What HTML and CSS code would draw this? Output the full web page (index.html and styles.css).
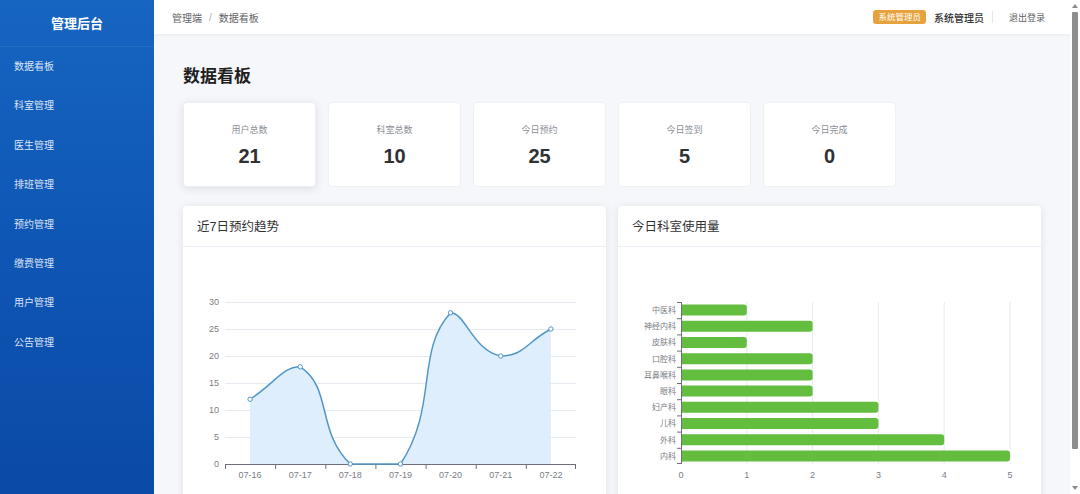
FILE: index.html
```html
<!DOCTYPE html>
<html lang="zh-CN">
<head>
<meta charset="utf-8">
<title>管理后台</title>
<link rel="stylesheet" href="styles.css">
</head>
<body>
<div class="layout">
  <aside class="sidebar">
    <div class="brand">管理后台</div>
    <ul class="menu">
      <li>数据看板</li>
      <li>科室管理</li>
      <li>医生管理</li>
      <li>排班管理</li>
      <li>预约管理</li>
      <li>缴费管理</li>
      <li>用户管理</li>
      <li>公告管理</li>
    </ul>
  </aside>
  <div class="main">
    <header class="topbar">
      <div class="crumbs"><span>管理端</span><span class="sep">/</span><span class="cur">数据看板</span></div>
      <div class="user">
        <span class="tag">系统管理员</span>
        <span class="uname">系统管理员</span>
        <span class="divider"></span>
        <span class="logout">退出登录</span>
      </div>
    </header>
    <section class="content">
      <h1 class="page-title">数据看板</h1>
      <div class="stats">
        <div class="stat hover"><div class="label">用户总数</div><div class="value">21</div></div>
        <div class="stat"><div class="label">科室总数</div><div class="value">10</div></div>
        <div class="stat"><div class="label">今日预约</div><div class="value">25</div></div>
        <div class="stat"><div class="label">今日签到</div><div class="value">5</div></div>
        <div class="stat"><div class="label">今日完成</div><div class="value">0</div></div>
      </div>
      <div class="charts">
        <div class="chart-card">
          <div class="chart-head">近7日预约趋势</div>
          <svg class="chart" viewBox="0 0 423 270" width="423" height="270">
            <g class="grid">
              <line x1="42" y1="55.5" x2="393" y2="55.5"/>
              <line x1="42" y1="82.5" x2="393" y2="82.5"/>
              <line x1="42" y1="109.5" x2="393" y2="109.5"/>
              <line x1="42" y1="136.5" x2="393" y2="136.5"/>
              <line x1="42" y1="163.5" x2="393" y2="163.5"/>
              <line x1="42" y1="190.5" x2="393" y2="190.5"/>
            </g>
            <path class="area" d="M67.07,152.2 C92.1,136 99.5,119.8 117.2,119.8 C149.6,140.76 132.9,183.7 167.3,217 C183.1,217 205.5,217 217.5,217 C255.6,159.5 232.2,103.9 267.6,65.8 C282.3,65.8 290.8,104.6 317.8,109 C341,109 342.85,95.5 367.9,82 L367.9,217 L67.07,217 Z"/>
            <g class="axis">
              <line x1="42" y1="217.5" x2="393" y2="217.5"/>
              <line x1="42.5" y1="217" x2="42.5" y2="222"/>
              <line x1="92.6" y1="217" x2="92.6" y2="222"/>
              <line x1="142.8" y1="217" x2="142.8" y2="222"/>
              <line x1="192.9" y1="217" x2="192.9" y2="222"/>
              <line x1="243.1" y1="217" x2="243.1" y2="222"/>
              <line x1="293.2" y1="217" x2="293.2" y2="222"/>
              <line x1="343.3" y1="217" x2="343.3" y2="222"/>
              <line x1="392.5" y1="217" x2="392.5" y2="222"/>
            </g>
            <path class="line" d="M67.07,152.2 C92.1,136 99.5,119.8 117.2,119.8 C149.6,140.76 132.9,183.7 167.3,217 C183.1,217 205.5,217 217.5,217 C255.6,159.5 232.2,103.9 267.6,65.8 C282.3,65.8 290.8,104.6 317.8,109 C341,109 342.85,95.5 367.9,82"/>
            <g class="dots">
              <circle cx="67.07" cy="152.2" r="2.2"/>
              <circle cx="117.2" cy="119.8" r="2.2"/>
              <circle cx="167.3" cy="217" r="2.2"/>
              <circle cx="217.5" cy="217" r="2.2"/>
              <circle cx="267.6" cy="65.8" r="2.2"/>
              <circle cx="317.8" cy="109" r="2.2"/>
              <circle cx="367.9" cy="82" r="2.2"/>
            </g>
            <g class="ylab">
              <text x="36" y="58">30</text>
              <text x="36" y="85">25</text>
              <text x="36" y="112">20</text>
              <text x="36" y="139">15</text>
              <text x="36" y="166">10</text>
              <text x="36" y="193">5</text>
              <text x="36" y="220">0</text>
            </g>
            <g class="xlab">
              <text x="67.1" y="231">07-16</text>
              <text x="117.2" y="231">07-17</text>
              <text x="167.3" y="231">07-18</text>
              <text x="217.5" y="231">07-19</text>
              <text x="267.6" y="231">07-20</text>
              <text x="317.8" y="231">07-21</text>
              <text x="367.9" y="231">07-22</text>
            </g>
          </svg>
        </div>
        <div class="chart-card">
          <div class="chart-head">今日科室使用量</div>
          <svg class="chart" viewBox="0 0 423 270" width="423" height="270">
            <g class="grid">
              <line x1="128.8" y1="55" x2="128.8" y2="217"/>
              <line x1="194.6" y1="55" x2="194.6" y2="217"/>
              <line x1="260.4" y1="55" x2="260.4" y2="217"/>
              <line x1="326.2" y1="55" x2="326.2" y2="217"/>
              <line x1="392" y1="55" x2="392" y2="217"/>
            </g>
            <g class="bars">
              <path d="M63,57.6 h62.8 a3,3 0 0 1 3,3 v5 a3,3 0 0 1 -3,3 h-62.8 z"/>
              <path d="M63,73.8 h128.6 a3,3 0 0 1 3,3 v5 a3,3 0 0 1 -3,3 h-128.6 z"/>
              <path d="M63,90 h62.8 a3,3 0 0 1 3,3 v5 a3,3 0 0 1 -3,3 h-62.8 z"/>
              <path d="M63,106.2 h128.6 a3,3 0 0 1 3,3 v5 a3,3 0 0 1 -3,3 h-128.6 z"/>
              <path d="M63,122.4 h128.6 a3,3 0 0 1 3,3 v5 a3,3 0 0 1 -3,3 h-128.6 z"/>
              <path d="M63,138.6 h128.6 a3,3 0 0 1 3,3 v5 a3,3 0 0 1 -3,3 h-128.6 z"/>
              <path d="M63,154.8 h194.4 a3,3 0 0 1 3,3 v5 a3,3 0 0 1 -3,3 h-194.4 z"/>
              <path d="M63,171 h194.4 a3,3 0 0 1 3,3 v5 a3,3 0 0 1 -3,3 h-194.4 z"/>
              <path d="M63,187.2 h260.2 a3,3 0 0 1 3,3 v5 a3,3 0 0 1 -3,3 h-260.2 z"/>
              <path d="M63,203.4 h326 a3,3 0 0 1 3,3 v5 a3,3 0 0 1 -3,3 h-326 z"/>
            </g>
            <g class="axis">
              <line x1="63.5" y1="55" x2="63.5" y2="217"/>
              <line x1="59" y1="55.5" x2="63" y2="55.5"/>
              <line x1="59" y1="71.7" x2="63" y2="71.7"/>
              <line x1="59" y1="87.9" x2="63" y2="87.9"/>
              <line x1="59" y1="104.1" x2="63" y2="104.1"/>
              <line x1="59" y1="120.3" x2="63" y2="120.3"/>
              <line x1="59" y1="136.5" x2="63" y2="136.5"/>
              <line x1="59" y1="152.7" x2="63" y2="152.7"/>
              <line x1="59" y1="168.9" x2="63" y2="168.9"/>
              <line x1="59" y1="185.1" x2="63" y2="185.1"/>
              <line x1="59" y1="201.3" x2="63" y2="201.3"/>
              <line x1="59" y1="216.5" x2="63" y2="216.5"/>
            </g>
            <g class="clab">
              <text x="58" y="66">中医科</text>
              <text x="58" y="82.2">神经内科</text>
              <text x="58" y="98.4">皮肤科</text>
              <text x="58" y="114.6">口腔科</text>
              <text x="58" y="130.8">耳鼻喉科</text>
              <text x="58" y="147">眼科</text>
              <text x="58" y="163.2">妇产科</text>
              <text x="58" y="179.4">儿科</text>
              <text x="58" y="195.6">外科</text>
              <text x="58" y="211.8">内科</text>
            </g>
            <g class="xlab">
              <text x="63" y="231">0</text>
              <text x="128.8" y="231">1</text>
              <text x="194.6" y="231">2</text>
              <text x="260.4" y="231">3</text>
              <text x="326.2" y="231">4</text>
              <text x="392" y="231">5</text>
            </g>
          </svg>
        </div>
      </div>
    </section>
  </div>
</div>
<div class="scrollbar" aria-hidden="true">
  <span class="arrow up"></span>
  <span class="thumb"></span>
  <span class="arrow down"></span>
</div>
</body>
</html>
```

FILE: styles.css
```css
* { box-sizing: border-box; }
html, body { margin: 0; padding: 0; }
body {
  font-family: "Liberation Sans", "Noto Sans CJK SC", sans-serif;
  background: #f5f7fb;
  color: #303133;
}

.layout { display: flex; align-items: flex-start; margin-right: 10px; }

.sidebar {
  position: sticky;
  top: 0;
  width: 154px;
  flex: 0 0 154px;
  height: 100vh;
  background: linear-gradient(180deg, #1665c1 0%, #0f56b4 50%, #0b4aa6 100%);
}
.brand {
  height: 47px;
  line-height: 47px;
  text-align: center;
  color: #ffffff;
  font-size: 13px;
  font-weight: 700;
  border-bottom: 1px solid rgba(255,255,255,0.07);
}
.menu { list-style: none; margin: 0; padding: 0; }
.menu li {
  height: 39.4px;
  line-height: 39.4px;
  padding-left: 14px;
  font-size: 10px;
  color: rgba(255,255,255,0.86);
}

.main { flex: 1; min-width: 0; }

.topbar {
  height: 34px;
  background: #ffffff;
  display: flex;
  align-items: center;
  justify-content: space-between;
  padding: 0 25px 0 18px;
  box-shadow: 0 1px 3px rgba(0,21,41,0.05);
}
.crumbs { font-size: 10px; color: #606266; display: flex; align-items: center; }
.crumbs .sep { color: #a8abb2; margin: 0 7px; }
.crumbs .cur { color: #606266; }
.user { display: flex; align-items: center; }
.tag {
  background: #e6a23c;
  color: #ffffff;
  font-size: 8.5px;
  height: 14px;
  line-height: 14px;
  padding: 0 5px;
  border-radius: 3px;
}
.uname { font-size: 10px; color: #303133; margin-left: 8px; font-weight: 500; }
.divider { width: 1px; height: 12px; background: #e4e7ed; margin: 0 16px 0 8px; }
.logout { font-size: 9px; color: #606266; }

.content { padding: 31px 29px 18px; }
.page-title {
  margin: 0 0 13px;
  font-size: 17px;
  line-height: 24px;
  font-weight: 700;
  color: #1f1f1f;
}
.stats {
  display: grid;
  grid-template-columns: repeat(6, 1fr);
  gap: 12px;
}
.stat {
  height: 85px;
  background: #ffffff;
  border: 1px solid #eff1f5;
  border-radius: 4px;
  padding-top: 21px;
  text-align: center;
}
.stat.hover { box-shadow: 0 2px 10px rgba(0,0,0,0.1); border-color: #ebeef5; }
.stat .label { font-size: 9px; line-height: 12px; color: #8c8f96; }
.stat .value {
  margin-top: 8px;
  font-size: 20px;
  line-height: 24px;
  font-weight: 700;
  color: #303133;
}

.charts {
  margin-top: 19px;
  display: grid;
  grid-template-columns: 1fr 1fr;
  gap: 12px;
}
.chart-card {
  background: #ffffff;
  border-radius: 4px;
  box-shadow: 0 1px 10px rgba(0,0,0,0.09);
  overflow: hidden;
}
.chart-head {
  height: 41px;
  padding: 3px 14px 0;
  line-height: 37px;
  font-size: 12.5px;
  color: #303133;
  border-bottom: 1px solid #ebeef5;
}
.chart { display: block; width: 423px; height: 270px; }
.chart .grid line { stroke: #e6e9f0; stroke-width: 1; }
.chart .axis line { stroke: #6e7079; stroke-width: 1; }
.chart .area { fill: #deeefc; stroke: none; }
.chart .line { fill: none; stroke: #5196c8; stroke-width: 1.5; }
.chart .dots circle { fill: #ffffff; stroke: #5196c8; stroke-width: 1; }
.chart .bars path { fill: #63bd3f; }
.chart text {
  font-family: "Liberation Sans", "Noto Sans CJK SC", sans-serif;
  fill: #7a7d85;
}
.chart .ylab text { font-size: 9px; text-anchor: end; }
.chart .xlab text { font-size: 9px; text-anchor: middle; }
.chart .clab text { font-size: 8px; text-anchor: end; }

/* drawn window scrollbar, over the right edge */
.scrollbar {
  position: fixed;
  top: 0;
  right: 0;
  width: 10px;
  height: 100vh;
  background: #ffffff;
  display: flex;
  flex-direction: column;
  align-items: center;
}
.scrollbar .arrow {
  flex: 0 0 auto;
  width: 0;
  height: 0;
  border-left: 3px solid transparent;
  border-right: 3px solid transparent;
}
.scrollbar .arrow.up { margin-top: 4px; border-bottom: 4px solid #8a8a8a; }
.scrollbar .arrow.down { margin-bottom: 4px; border-top: 4px solid #8a8a8a; }
.scrollbar .thumb {
  width: 6px;
  height: 437px;
  margin-top: 4px;
  background: #8d8d8d;
  border-radius: 1px;
}
.scrollbar .thumb + .arrow { margin-top: auto; }
```
